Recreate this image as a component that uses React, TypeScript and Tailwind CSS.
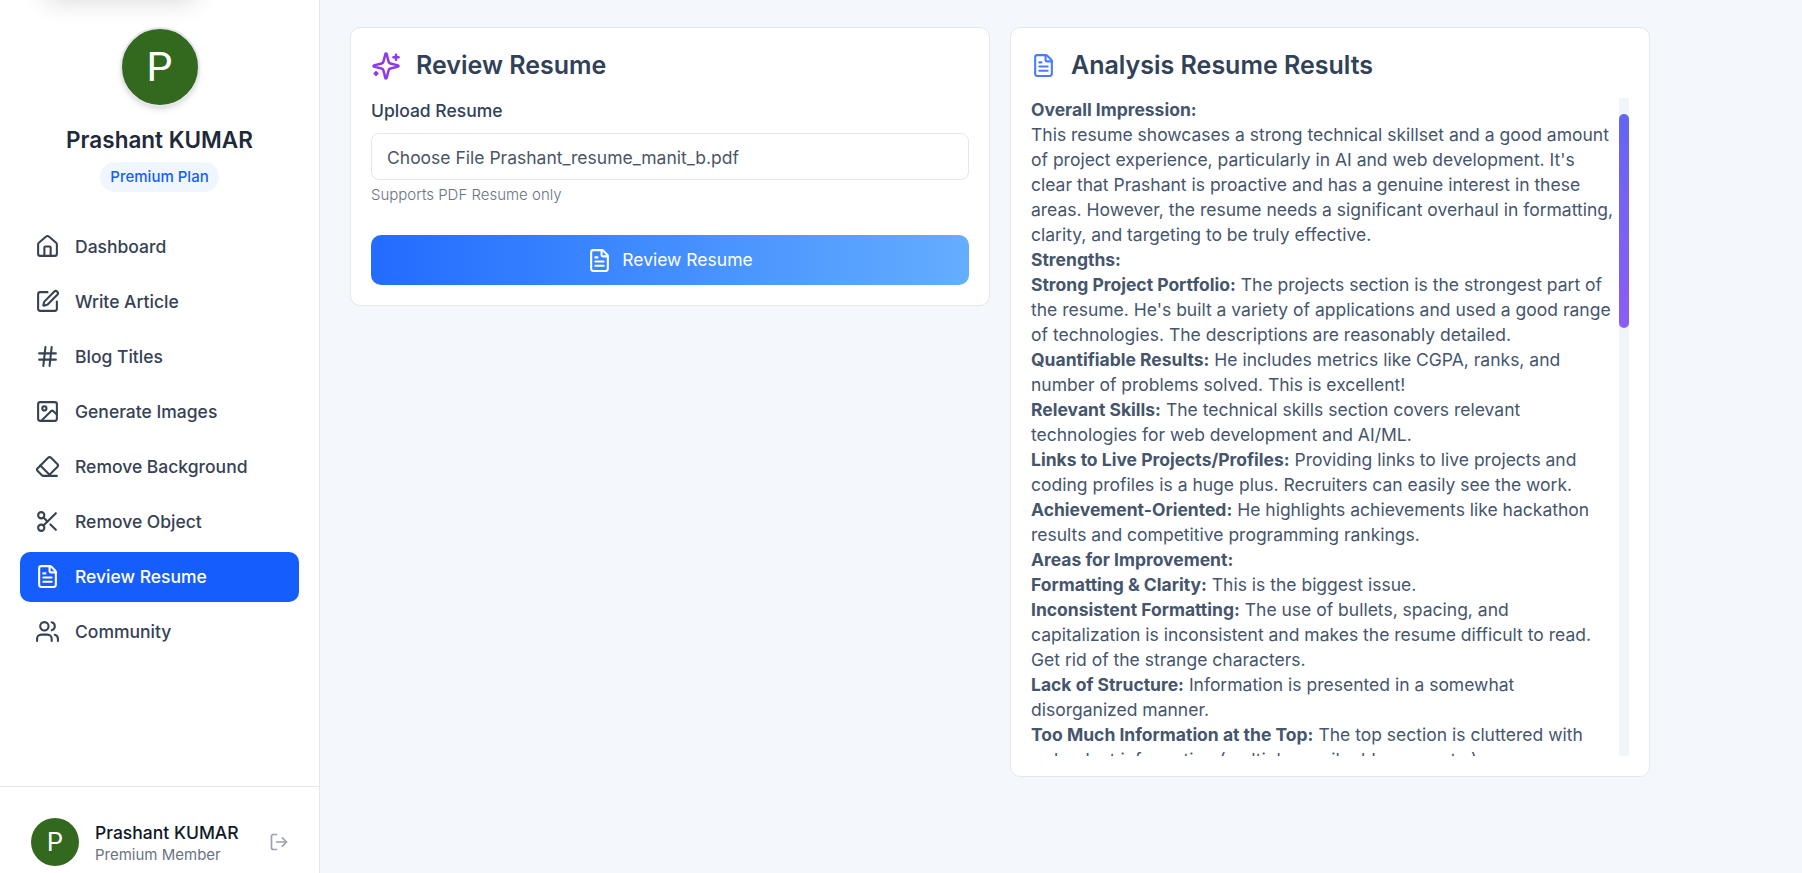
import {
  House,
  SquarePen,
  Hash,
  Image,
  Eraser,
  Scissors,
  FileText,
  Users,
  LogOut,
} from "lucide-react";

const navItems = [
  { label: "Dashboard", Icon: House },
  { label: "Write Article", Icon: SquarePen },
  { label: "Blog Titles", Icon: Hash },
  { label: "Generate Images", Icon: Image },
  { label: "Remove Background", Icon: Eraser },
  { label: "Remove Object", Icon: Scissors },
  { label: "Review Resume", Icon: FileText, active: true },
  { label: "Community", Icon: Users },
];

type Entry = { title: string; lines: string[] };

const analysis: Entry[] = [
  {
    title: "Overall Impression:",
    lines: [
      "",
      "This resume showcases a strong technical skillset and a good amount",
      "of project experience, particularly in AI and web development. It's",
      "clear that Prashant is proactive and has a genuine interest in these",
      "areas. However, the resume needs a significant overhaul in formatting,",
      "clarity, and targeting to be truly effective.",
    ],
  },
  { title: "Strengths:", lines: [""] },
  {
    title: "Strong Project Portfolio:",
    lines: [
      "The projects section is the strongest part of",
      "the resume. He's built a variety of applications and used a good range",
      "of technologies. The descriptions are reasonably detailed.",
    ],
  },
  {
    title: "Quantifiable Results:",
    lines: [
      "He includes metrics like CGPA, ranks, and",
      "number of problems solved. This is excellent!",
    ],
  },
  {
    title: "Relevant Skills:",
    lines: [
      "The technical skills section covers relevant",
      "technologies for web development and AI/ML.",
    ],
  },
  {
    title: "Links to Live Projects/Profiles:",
    lines: [
      "Providing links to live projects and",
      "coding profiles is a huge plus. Recruiters can easily see the work.",
    ],
  },
  {
    title: "Achievement-Oriented:",
    lines: [
      "He highlights achievements like hackathon",
      "results and competitive programming rankings.",
    ],
  },
  { title: "Areas for Improvement:", lines: [""] },
  { title: "Formatting & Clarity:", lines: ["This is the biggest issue."] },
  {
    title: "Inconsistent Formatting:",
    lines: [
      "The use of bullets, spacing, and",
      "capitalization is inconsistent and makes the resume difficult to read.",
      "Get rid of the strange characters.",
    ],
  },
  {
    title: "Lack of Structure:",
    lines: ["Information is presented in a somewhat", "disorganized manner."],
  },
  {
    title: "Too Much Information at the Top:",
    lines: [
      "The top section is cluttered with",
      "redundant information (multiple email addresses, etc.).",
    ],
  },
];

function SparklesIcon() {
  return (
    <svg
      width="30"
      height="30"
      viewBox="0 0 24 24"
      fill="none"
      stroke="currentColor"
      strokeWidth="2"
      strokeLinecap="round"
      strokeLinejoin="round"
      className="text-[#8e37eb]"
    >
      <path d="M9.937 15.5A2 2 0 0 0 8.5 14.063l-6.135-1.582a.5.5 0 0 1 0-.962L8.5 9.936A2 2 0 0 0 9.937 8.5l1.582-6.135a.5.5 0 0 1 .963 0L14.063 8.5A2 2 0 0 0 15.5 9.937l6.135 1.581a.5.5 0 0 1 0 .964L15.5 14.063a2 2 0 0 0-1.437 1.437l-1.582 6.135a.5.5 0 0 1-.963 0z" />
      <path d="M20 3v4" />
      <path d="M22 5h-4" />
      <path d="M4 17v2" />
      <path d="M5 18H3" />
    </svg>
  );
}

function Sidebar() {
  return (
    <aside className="relative flex h-full w-80 shrink-0 flex-col overflow-hidden border-r border-gray-200 bg-white">
      <div className="absolute -top-[42px] left-[45px] h-10 w-[152px] rounded-lg shadow-[0_4px_24px_rgba(0,0,0,0.14)]" />
      <div className="flex flex-col items-center pt-[27px]">
        <div className="flex size-20 items-center justify-center rounded-full border-2 border-gray-200 bg-[#33691e] font-['Roboto',sans-serif] text-[41px] leading-none text-white shadow-md">
          P
        </div>
        <h1 className="mt-[15px] text-[22.5px] leading-[35px] font-semibold text-gray-800">
          Prashant KUMAR
        </h1>
        <span className="mt-[5px] flex h-[30px] items-center rounded-full bg-blue-50 px-[10px] text-[15px] font-medium text-[#155dfc]">
          Premium Plan
        </span>
      </div>
      <nav className="mt-[30px] flex flex-col gap-[5px] px-5 text-[17.5px] font-medium">
        {navItems.map(({ label, Icon, active }) => (
          <a
            key={label}
            className={
              active
                ? "flex h-[50px] items-center gap-[15px] rounded-[10px] bg-[#155dfc] px-[15px] text-white"
                : "flex h-[50px] items-center gap-[15px] rounded-[10px] px-[15px] text-gray-700"
            }
          >
            <Icon size={25} className="-mt-px" />
            {label}
          </a>
        ))}
      </nav>
      <div className="mt-auto flex h-[87px] shrink-0 items-start border-t border-gray-200 pt-[31px] pl-[31px]">
        <div className="flex size-12 items-center justify-center rounded-full bg-[#33691e] font-['Roboto',sans-serif] text-[25px] leading-none text-white">
          P
        </div>
        <div className="ml-4 pt-[2px]">
          <p className="text-[17.5px] leading-[25px] font-medium text-gray-900">Prashant KUMAR</p>
          <p className="text-[15px] leading-5 text-gray-500">Premium Member</p>
        </div>
        <LogOut size={20} className="mt-[14px] mr-[30px] ml-auto text-gray-400" />
      </div>
    </aside>
  );
}

function UploadCard() {
  return (
    <section className="h-[279px] w-[640px] rounded-[10px] border border-gray-200 bg-white px-5 pt-[20px]">
      <div className="flex items-center gap-[15px]">
        <SparklesIcon />
        <h2 className="text-[25px] leading-[35px] font-semibold text-slate-700">Review Resume</h2>
      </div>
      <label className="mt-[15px] block text-[17.5px] leading-[25px] font-medium text-slate-700">
        Upload Resume
      </label>
      <div className="mt-[10px] flex h-[47px] items-center rounded-[8px] border border-gray-200 px-[15px] pt-[2px] text-[17.5px] leading-[25px] text-gray-600">
        Choose File Prashant_resume_manit_b.pdf
      </div>
      <p className="mt-[5px] text-[15px] leading-5 font-light text-gray-500">
        Supports PDF Resume only
      </p>
      <button className="mt-[30px] flex h-[50px] w-full items-center justify-center gap-[10px] rounded-[10px] bg-linear-to-r from-[#226bff] to-[#65adff] text-[17.5px] text-white">
        <FileText size={25} />
        Review Resume
      </button>
    </section>
  );
}

function ResultsCard() {
  return (
    <section className="h-[750px] w-[640px] rounded-[10px] border border-gray-200 bg-white px-5 pt-[20px]">
      <div className="flex items-center gap-[15px]">
        <FileText size={25} className="text-[#4a7aff]" />
        <h2 className="text-[25px] leading-[35px] font-semibold text-slate-700">
          Analysis Resume Results
        </h2>
      </div>
      <div className="mt-[15px] flex h-[658px]">
        <div className="min-w-0 flex-1 overflow-hidden text-[17.5px] leading-[25px] whitespace-nowrap text-slate-600">
          <div className="-mt-px">
            {analysis.map(({ title, lines }) => (
              <div key={title}>
                {lines.map((line, i) => (
                  <p key={i}>
                    {i === 0 && <strong className="font-bold">{title}</strong>}
                    {i === 0 && " "}
                    {line}
                  </p>
                ))}
              </div>
            ))}
          </div>
        </div>
        <div className="w-[10px] shrink-0 bg-slate-100 pt-4">
          <div className="h-[214px] rounded-full bg-linear-to-b from-[#6366f1] to-[#8b5cf6]" />
        </div>
      </div>
    </section>
  );
}

export default function App() {
  return (
    <div className="flex h-[873px] overflow-hidden bg-[#f4f7fb] font-['Inter',sans-serif]">
      <Sidebar />
      <main className="flex flex-1 items-start gap-5 pt-[27px] pl-[30px]">
        <UploadCard />
        <ResultsCard />
      </main>
    </div>
  );
}
